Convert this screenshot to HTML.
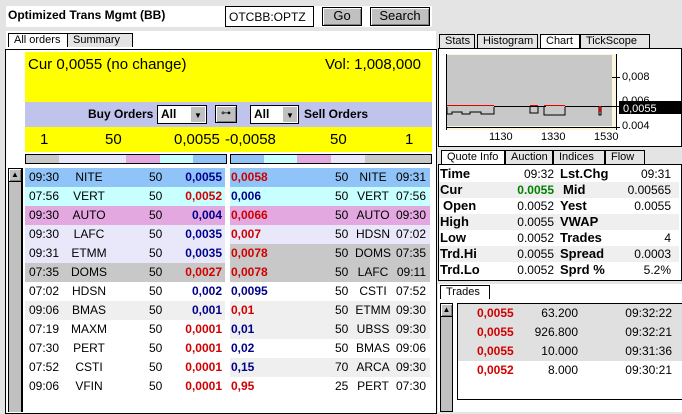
<html><head><style>
*{margin:0;padding:0;box-sizing:border-box}
body{width:682px;height:412px;background:#e4e4e4;font-family:"Liberation Sans",sans-serif;font-size:12px;position:relative;overflow:hidden}
.a{position:absolute}
.tab{position:absolute;height:14px;font-size:11px;border:1px solid #000;border-bottom:none;background:#e4e4e4;padding-left:5px;line-height:12px}
.btn{position:absolute;background:#c0c0c0;border:1px solid #000;box-shadow:inset 1px 1px #fff,inset -1px -1px #808080;text-align:center;line-height:16px;font-size:13px}
.row{position:absolute;height:19px;font-size:12px;line-height:19px}
.row span{position:absolute}
.b{color:#00008c;font-weight:bold}.r{color:#d00000;font-weight:bold}
.q{position:absolute;left:439px;width:240px;height:16px;font-size:12px;line-height:16px}
.q span{position:absolute}
.qb{font-weight:bold;font-size:13px}
</style></head><body>
<div class="a" style="left:6px;top:6px;width:426px;height:21px;background:#fff"></div>
<div class="a" style="left:8px;top:8px;font-weight:bold;font-size:12px">Optimized Trans Mgmt (BB)</div>
<div class="a" style="left:225px;top:6px;width:89px;height:21px;border:1px solid #000;background:#fff;font-size:12px;padding:3px 0 0 3px">OTCBB:OPTZ</div>
<div class="btn" style="left:322px;top:7px;width:40px;height:19px">Go</div>
<div class="btn" style="left:370px;top:7px;width:60px;height:19px">Search</div>
<div class="a" style="left:6px;top:31px;width:430px;height:18px;background:#fff"></div>
<div class="tab" style="left:8px;top:33px;width:60px;background:#fff">All orders</div>
<div class="tab" style="left:67px;top:33px;width:66px">Summary</div>
<div class="a" style="left:5px;top:49px;width:432px;height:365px;border:1px solid #000;background:#fff"></div>
<div class="a" style="left:25px;top:52px;width:407px;height:50px;background:#ff0"></div>
<div class="a" style="left:28px;top:56px;font-size:15px">Cur 0,0055 (no change)</div>
<div class="a" style="left:325px;top:56px;font-size:15px">Vol: 1,008,000</div>
<div class="a" style="left:25px;top:102px;width:407px;height:25px;background:#c0c4ec"></div>
<div class="a" style="left:88px;top:107px;font-weight:bold;font-size:12px">Buy Orders</div>
<div class="a" style="left:157px;top:105px;width:50px;height:19px;border:1px solid #000;background:#fff;font-weight:bold;padding-left:3px;line-height:17px">All<div class="a" style="right:1px;top:1px;width:14px;height:15px;background:#c0c0c0;font-size:8px;text-align:center">▼</div></div>
<div class="btn" style="left:215px;top:105px;width:22px;height:18px;font-size:10px">⊶</div>
<div class="a" style="left:250px;top:105px;width:49px;height:19px;border:1px solid #000;background:#fff;font-weight:bold;padding-left:3px;line-height:17px">All<div class="a" style="right:1px;top:1px;width:14px;height:15px;background:#c0c0c0;font-size:8px;text-align:center">▼</div></div>
<div class="a" style="left:304px;top:107px;font-weight:bold;font-size:12px">Sell Orders</div>
<div class="a" style="left:25px;top:127px;width:407px;height:25px;background:#ff0;font-size:15px">
<span class="a" style="left:15px;top:4px">1</span><span class="a" style="left:80px;top:4px">50</span><span class="a" style="left:149px;top:4px">0,0055</span><span class="a" style="left:200px;top:4px">-0,0058</span><span class="a" style="left:305px;top:4px">50</span><span class="a" style="left:380px;top:4px">1</span></div>
<div class="a" style="left:25px;top:154px;width:202px;height:10px;border:1px solid #000;background:linear-gradient(90deg,#c8c8c8 0 33px,#e8e8fa 33px 100px,#e4a8e0 100px 134px,#c8ffff 134px 167px,#90c4f8 167px)"></div>
<div class="a" style="left:230px;top:154px;width:202px;height:10px;border:1px solid #000;background:linear-gradient(90deg,#90c4f8 0 33px,#c8ffff 33px 66px,#e4a8e0 66px 100px,#e8e8fa 100px 134px,#c8c8c8 134px)"></div>
<div class="a" style="left:8px;top:168px;width:14px;height:244px;background:#c0c0c0;border-left:1px solid #000;border-right:1px solid #000"></div>
<div class="btn" style="left:8px;top:168px;width:14px;height:14px;font-size:8px;line-height:12px">▲</div>
<div class="a" style="left:22px;top:168px;width:1px;height:244px;background:#000"></div>
<div id="L"></div>
<!-- right side -->
<div class="tab" style="left:439px;top:34px;width:36px">Stats</div>
<div class="tab" style="left:477px;top:34px;width:61px">Histogram</div>
<div class="tab" style="left:540px;top:34px;width:40px;background:#fff">Chart</div>
<div class="tab" style="left:580px;top:34px;width:70px">TickScope</div>
<div class="a" style="left:438px;top:48px;width:244px;height:99px;border:1px solid #000;background:#fff"></div>
<svg class="a" style="left:446px;top:54px" width="236" height="92" font-family="Liberation Sans">
<rect x="0" y="0" width="170" height="76" fill="#fbf6dc"/>
<rect x="1" y="1" width="165" height="71" fill="#c8c8c8"/>
<line x1="0" y1="73.5" x2="170" y2="73.5" stroke="#000"/>
<line x1="0.5" y1="0" x2="0.5" y2="76" stroke="#000"/>
<line x1="48" y1="52.5" x2="100" y2="52.5" stroke="#000"/>
<line x1="119" y1="52.5" x2="176" y2="52.5" stroke="#000"/>
<polyline fill="none" stroke="#000" points="1,53 1,60 6,60 6,58 16,58 16,60 24,60 24,58 35,58 35,60 48,60 48,53"/>
<polyline fill="none" stroke="#000" points="84,53 84,59 92,59 92,53"/>
<polyline fill="none" stroke="#000" points="98,53 98,61 119,61 119,53"/>
<polyline fill="none" stroke="#000" points="153,53 153,61 155,61 155,53"/>
<line x1="1" y1="51.5" x2="48" y2="51.5" stroke="#e00000"/>
<line x1="84" y1="51.5" x2="92" y2="51.5" stroke="#e00000"/>
<line x1="98" y1="51.5" x2="119" y2="51.5" stroke="#e00000"/>
<rect x="153" y="52" width="2" height="6" fill="#e00000"/>
<line x1="170.5" y1="0" x2="170.5" y2="76" stroke="#000"/>
<line x1="166" y1="23.5" x2="174" y2="23.5" stroke="#000"/>
<line x1="166" y1="73.5" x2="174" y2="73.5" stroke="#000"/>
<text x="176" y="26" font-size="11">0,008</text>
<text x="176" y="50" font-size="11">0,006</text>
<text x="176" y="75" font-size="11">0.004</text>
<rect x="173" y="47" width="63" height="13" fill="#000"/>
<text x="177" y="58" font-size="11" fill="#fff">0,0055</text>
<text x="43" y="86" font-size="11">1130</text>
<text x="95" y="86" font-size="11">1330</text>
<text x="148" y="86" font-size="11">1530</text>
</svg>
<div class="tab" style="left:441px;top:150px;width:64px;background:#fff">Quote Info</div>
<div class="tab" style="left:505px;top:150px;width:48px">Auction</div>
<div class="tab" style="left:553px;top:150px;width:52px">Indices</div>
<div class="tab" style="left:605px;top:150px;width:40px">Flow</div>
<div class="a" style="left:438px;top:164px;width:244px;height:117px;border:1px solid #000;background:#fff"></div>
<div id="Q"></div>
<div class="a" style="left:438px;top:284px;width:244px;height:16px;background:#fff"></div>
<div class="tab" style="left:440px;top:285px;width:50px;background:#fff">Trades</div>
<div class="a" style="left:438px;top:300px;width:244px;height:112px;background:#fff"></div>
<div class="a" style="left:440px;top:303px;width:13px;height:109px;background:#c0c0c0;border:1px solid #000"></div>
<div class="btn" style="left:440px;top:303px;width:13px;height:14px;font-size:8px;line-height:12px">▲</div>
<div class="a" style="left:457px;top:303px;width:225px;height:97px;border:1px solid #000;border-right:none;background:#fff"></div>
<div id="T"></div>
<script>
var L=[["09:30","NITE","0,0055","b","#90c4f8","0,0058","r","NITE","09:31","#90c4f8","50"],
["07:56","VERT","0,0052","r","#c8ffff","0,006","b","VERT","07:56","#c8ffff","50"],
["09:30","AUTO","0,004","b","#e4a8e0","0,0066","r","AUTO","09:30","#e4a8e0","50"],
["09:30","LAFC","0,0035","b","#e8e8fa","0,007","r","HDSN","07:02","#e8e8fa","50"],
["09:31","ETMM","0,0035","b","#e8e8fa","0,0078","r","DOMS","07:35","#c8c8c8","50"],
["07:35","DOMS","0,0027","r","#c8c8c8","0,0078","r","LAFC","09:11","#c8c8c8","50"],
["07:02","HDSN","0,002","b","#fff","0,0095","b","CSTI","07:52","#fff","50"],
["09:06","BMAS","0,001","b","#efefef","0,01","r","ETMM","09:30","#efefef","50"],
["07:19","MAXM","0,0001","r","#fff","0,01","b","UBSS","09:30","#efefef","50"],
["07:30","PERT","0,0001","r","#fff","0,02","b","BMAS","09:06","#fff","50"],
["07:52","CSTI","0,0001","r","#fff","0,15","b","ARCA","09:30","#efefef","70"],
["09:06","VFIN","0,0001","r","#fff","0,95","r","PERT","07:30","#fff","25"]];
var h="";L.forEach(function(r,i){var y=168+i*19;
h+='<div class="row" style="left:25px;top:'+y+'px;width:200px;background:'+r[4]+'"><span style="left:4px">'+r[0]+'</span><span style="left:44px;width:40px;text-align:center">'+r[1]+'</span><span style="left:124px">50</span><span class="'+r[3]+'" style="right:3px">'+r[2]+'</span></div>';
h+='<div class="row" style="left:230px;top:'+y+'px;width:200px;background:'+r[9]+'"><span class="'+r[6]+'" style="left:1px">'+r[5]+'</span><span style="left:105px">'+r[10]+'</span><span style="left:123px;width:40px;text-align:center">'+r[7]+'</span><span style="right:4px">'+r[8]+'</span></div>';});
document.getElementById("L").innerHTML=h;
var Q=[["Time","09:32","Lst.Chg","09:31",0],["Cur","0.0055","Mid","0.00565",1],["Open","0.0052","Yest","0.0055",0],["High","0.0055","VWAP","",1],["Low","0.0052","Trades","4",0],["Trd.Hi","0.0055","Spread","0.0003",1],["Trd.Lo","0.0052","Sprd %","5.2%",0]];
h="";Q.forEach(function(r,i){var y=166+i*16;
h+='<div class="q" style="top:'+y+'px;background:'+(r[4]?'#efefef':'#fff')+'"><span class="qb" style="left:'+((i==2)?4:1)+'px">'+r[0]+'</span><span style="right:125px;'+(i==1?'color:#008000;font-weight:bold':'')+'">'+r[1]+'</span><span class="qb" style="left:'+((i==1)?124:121)+'px">'+r[2]+'</span><span style="right:8px">'+r[3]+'</span></div>';});
document.getElementById("Q").innerHTML=h;
var T=[["0,0055","63.200","09:32:22"],["0,0055","926.800","09:32:21"],["0,0055","10.000","09:31:36"],["0,0052","8.000","09:30:21"]];
h="";T.forEach(function(r,i){var y=304+i*19;
h+='<div class="row" style="left:458px;top:'+y+'px;width:224px;background:'+(i<3?'#e0e0e0':'#fff')+'"><span class="r" style="left:19px">'+r[0]+'</span><span style="right:104px">'+r[1]+'</span><span style="right:10px">'+r[2]+'</span></div>';});
document.getElementById("T").innerHTML=h;
</script>
</body></html>
